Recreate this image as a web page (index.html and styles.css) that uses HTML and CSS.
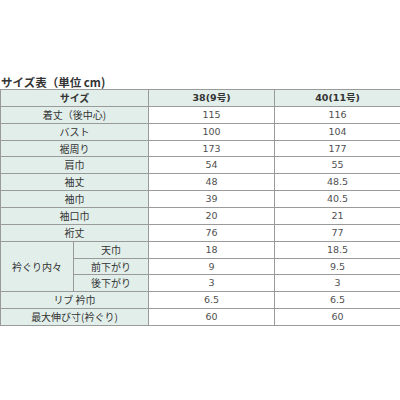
FILE: index.html
```html
<!DOCTYPE html>
<html lang="ja">
<head>
<meta charset="utf-8">
<link rel="stylesheet" href="styles.css">
</head>
<body>
<h1 class="title">サイズ表（単位 cm)</h1>
<table class="size">
<colgroup><col class="c1"><col class="c2"><col class="c3"><col class="c4"></colgroup>
<tr class="head"><th colspan="2">サイズ</th><th class="num">38(9号)</th><th class="num">40(11号)</th></tr>
<tr><th colspan="2">着丈（後中心)</th><td>115</td><td>116</td></tr>
<tr><th colspan="2">バスト</th><td>100</td><td>104</td></tr>
<tr><th colspan="2">裾周り</th><td>173</td><td>177</td></tr>
<tr><th colspan="2">肩巾</th><td>54</td><td>55</td></tr>
<tr><th colspan="2">袖丈</th><td>48</td><td>48.5</td></tr>
<tr><th colspan="2">袖巾</th><td>39</td><td>40.5</td></tr>
<tr><th colspan="2">袖口巾</th><td>20</td><td>21</td></tr>
<tr><th colspan="2">裄丈</th><td>76</td><td>77</td></tr>
<tr><th rowspan="3">衿ぐり内々</th><th>天巾</th><td>18</td><td>18.5</td></tr>
<tr><th>前下がり</th><td>9</td><td>9.5</td></tr>
<tr><th>後下がり</th><td>3</td><td>3</td></tr>
<tr><th colspan="2">リブ 衿巾</th><td>6.5</td><td>6.5</td></tr>
<tr><th colspan="2">最大伸び寸(衿ぐり)</th><td>60</td><td>60</td></tr>
</table>
</body>
</html>
```

FILE: styles.css
```css
html, body {
  margin: 0;
  padding: 0;
  background: #ffffff;
}
body {
  width: 400px;
  font-family: "Noto Sans CJK JP", "DejaVu Sans", sans-serif;
  color: #333333;
}
.title {
  margin: 75px 0 0 1px;
  font-size: 11.5px;
  line-height: 14px;
  font-weight: bold;
  color: #333333;
}
.size {
  border-collapse: collapse;
  table-layout: fixed;
  width: 400px;
}
.c1 { width: 73px; }
.c2 { width: 75px; }
.c3 { width: 126px; }
.c4 { width: 126px; }
.size th, .size td {
  border: 1px solid #9a9a9a;
  height: 15.86px;
  padding: 0;
  text-align: center;
  vertical-align: middle;
  font-size: 9.5px;
  line-height: 10px;
}
.size th {
  background: #e2eeea;
  font-weight: normal;
  color: #333333;
  font-size: 10px;
}
.size td {
  font-family: "DejaVu Sans", sans-serif;
  color: #505050;
  background: #ffffff;
}
.size .head th {
  font-weight: bold;
}
.size .head .num {
  background: #e2eeea;
  font-family: "DejaVu Sans", "Noto Sans CJK JP", sans-serif;
  font-size: 9.5px;
}
```
